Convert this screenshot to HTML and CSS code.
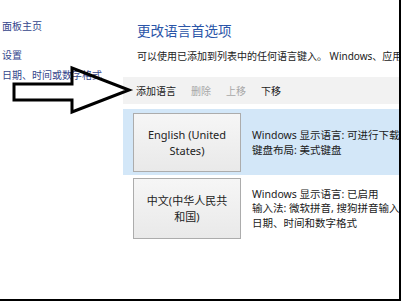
FILE: index.html
```html
<!DOCTYPE html>
<html lang="zh-CN">
<head>
<meta charset="utf-8">
<link rel="stylesheet" href="styles.css">
</head>
<body>
<div class="frame">
  <nav class="side">
    <a class="link first">面板主页</a>
    <a class="link second">设置</a>
    <a class="link">日期、时间或数字格式</a>
  </nav>
  <main class="main">
    <h1 class="title">更改语言首选项</h1>
    <p class="desc">可以使用已添加到列表中的任何语言键入。 Windows、应用和网站将以列表中第一个受支持的语言显示。</p>
    <div class="toolbar">
      <span class="tool">添加语言</span>
      <span class="tool disabled">删除</span>
      <span class="tool disabled">上移</span>
      <span class="tool">下移</span>
    </div>
    <div class="row selected">
      <div class="langbtn">English (United<br>States)</div>
      <div class="info">Windows 显示语言: 可进行下载<br>键盘布局: 美式键盘</div>
    </div>
    <div class="row second">
      <div class="langbtn tall">中文(中华人民共<br>和国)</div>
      <div class="info">Windows 显示语言: 已启用<br>输入法: 微软拼音, 搜狗拼音输入法<br>日期、时间和数字格式</div>
    </div>
  </main>
  <svg class="arrow" width="140" height="120" viewBox="0 0 140 120">
    <polygon points="14,84 72,84 72,68 129,90 72,112 72,100 14,100" fill="none" stroke="#000" stroke-width="3" stroke-linejoin="miter"/>
  </svg>
</div>
</body>
</html>
```

FILE: styles.css
```css
* { box-sizing: border-box; }
html, body { margin: 0; padding: 0; background: #fff; }
body {
  font-family: "Noto Sans", "Noto Sans CJK SC", sans-serif;
  color: #1a1a1a;
}
.frame {
  position: relative;
  width: 401px;
  height: 301px;
  border-right: 2px solid #000;
  border-bottom: 2px solid #000;
  overflow: hidden;
  display: flex;
}
.side {
  width: 123px;
  flex: none;
  display: flex;
  flex-direction: column;
  padding: 19px 0 0 2px;
}
.link {
  font-family: "Noto Sans CJK SC", sans-serif;
  font-size: 10px;
  line-height: 14px;
  color: #34468c;
  white-space: nowrap;
}
.link.first { margin-bottom: 15px; }
.link.second { margin-bottom: 6px; }
.main {
  flex: 1;
  min-width: 0;
  display: flex;
  flex-direction: column;
}
.title {
  margin: 21px 0 0 14px;
  font-family: "Noto Sans CJK SC", sans-serif;
  font-weight: normal;
  font-size: 13.5px;
  line-height: 18px;
  color: #2a55a8;
}
.desc {
  margin: 10px 0 0 14px;
  font-family: "Noto Sans", "Noto Sans CJK SC", sans-serif;
  font-size: 10px;
  line-height: 14px;
  white-space: nowrap;
  color: #222;
}
.toolbar {
  margin-top: 14px;
  height: 27px;
  background: #f2f2f2;
  display: flex;
  align-items: center;
  gap: 15px;
  padding-left: 13px;
}
.tool {
  font-family: "Noto Sans CJK SC", sans-serif;
  font-size: 10px;
  color: #1a1a1a;
}
.tool.disabled { color: #a8a8a8; }
.row {
  display: flex;
  align-items: center;
  padding: 4px 0 3px 10px;
}
.row.selected {
  margin-top: 5px;
  background: #d3e7f8;
}
.row.second { padding-top: 3px; }
.langbtn {
  width: 108px;
  height: 59px;
  flex: none;
  border: 1px solid #acacac;
  background: linear-gradient(#f6f6f6, #e9e9e9);
  display: flex;
  align-items: center;
  justify-content: center;
  text-align: center;
  font-family: "Noto Sans", "Noto Sans CJK SC", sans-serif;
  font-size: 11px;
  line-height: 16px;
  color: #222;
}
.langbtn.tall { height: 61px; }
.info {
  margin-left: 11px;
  font-family: "Noto Sans", "Noto Sans CJK SC", sans-serif;
  font-size: 10.5px;
  line-height: 14.5px;
  white-space: nowrap;
  color: #1a1a1a;
}
.arrow {
  position: absolute;
  left: 0;
  top: 0;
}
```
